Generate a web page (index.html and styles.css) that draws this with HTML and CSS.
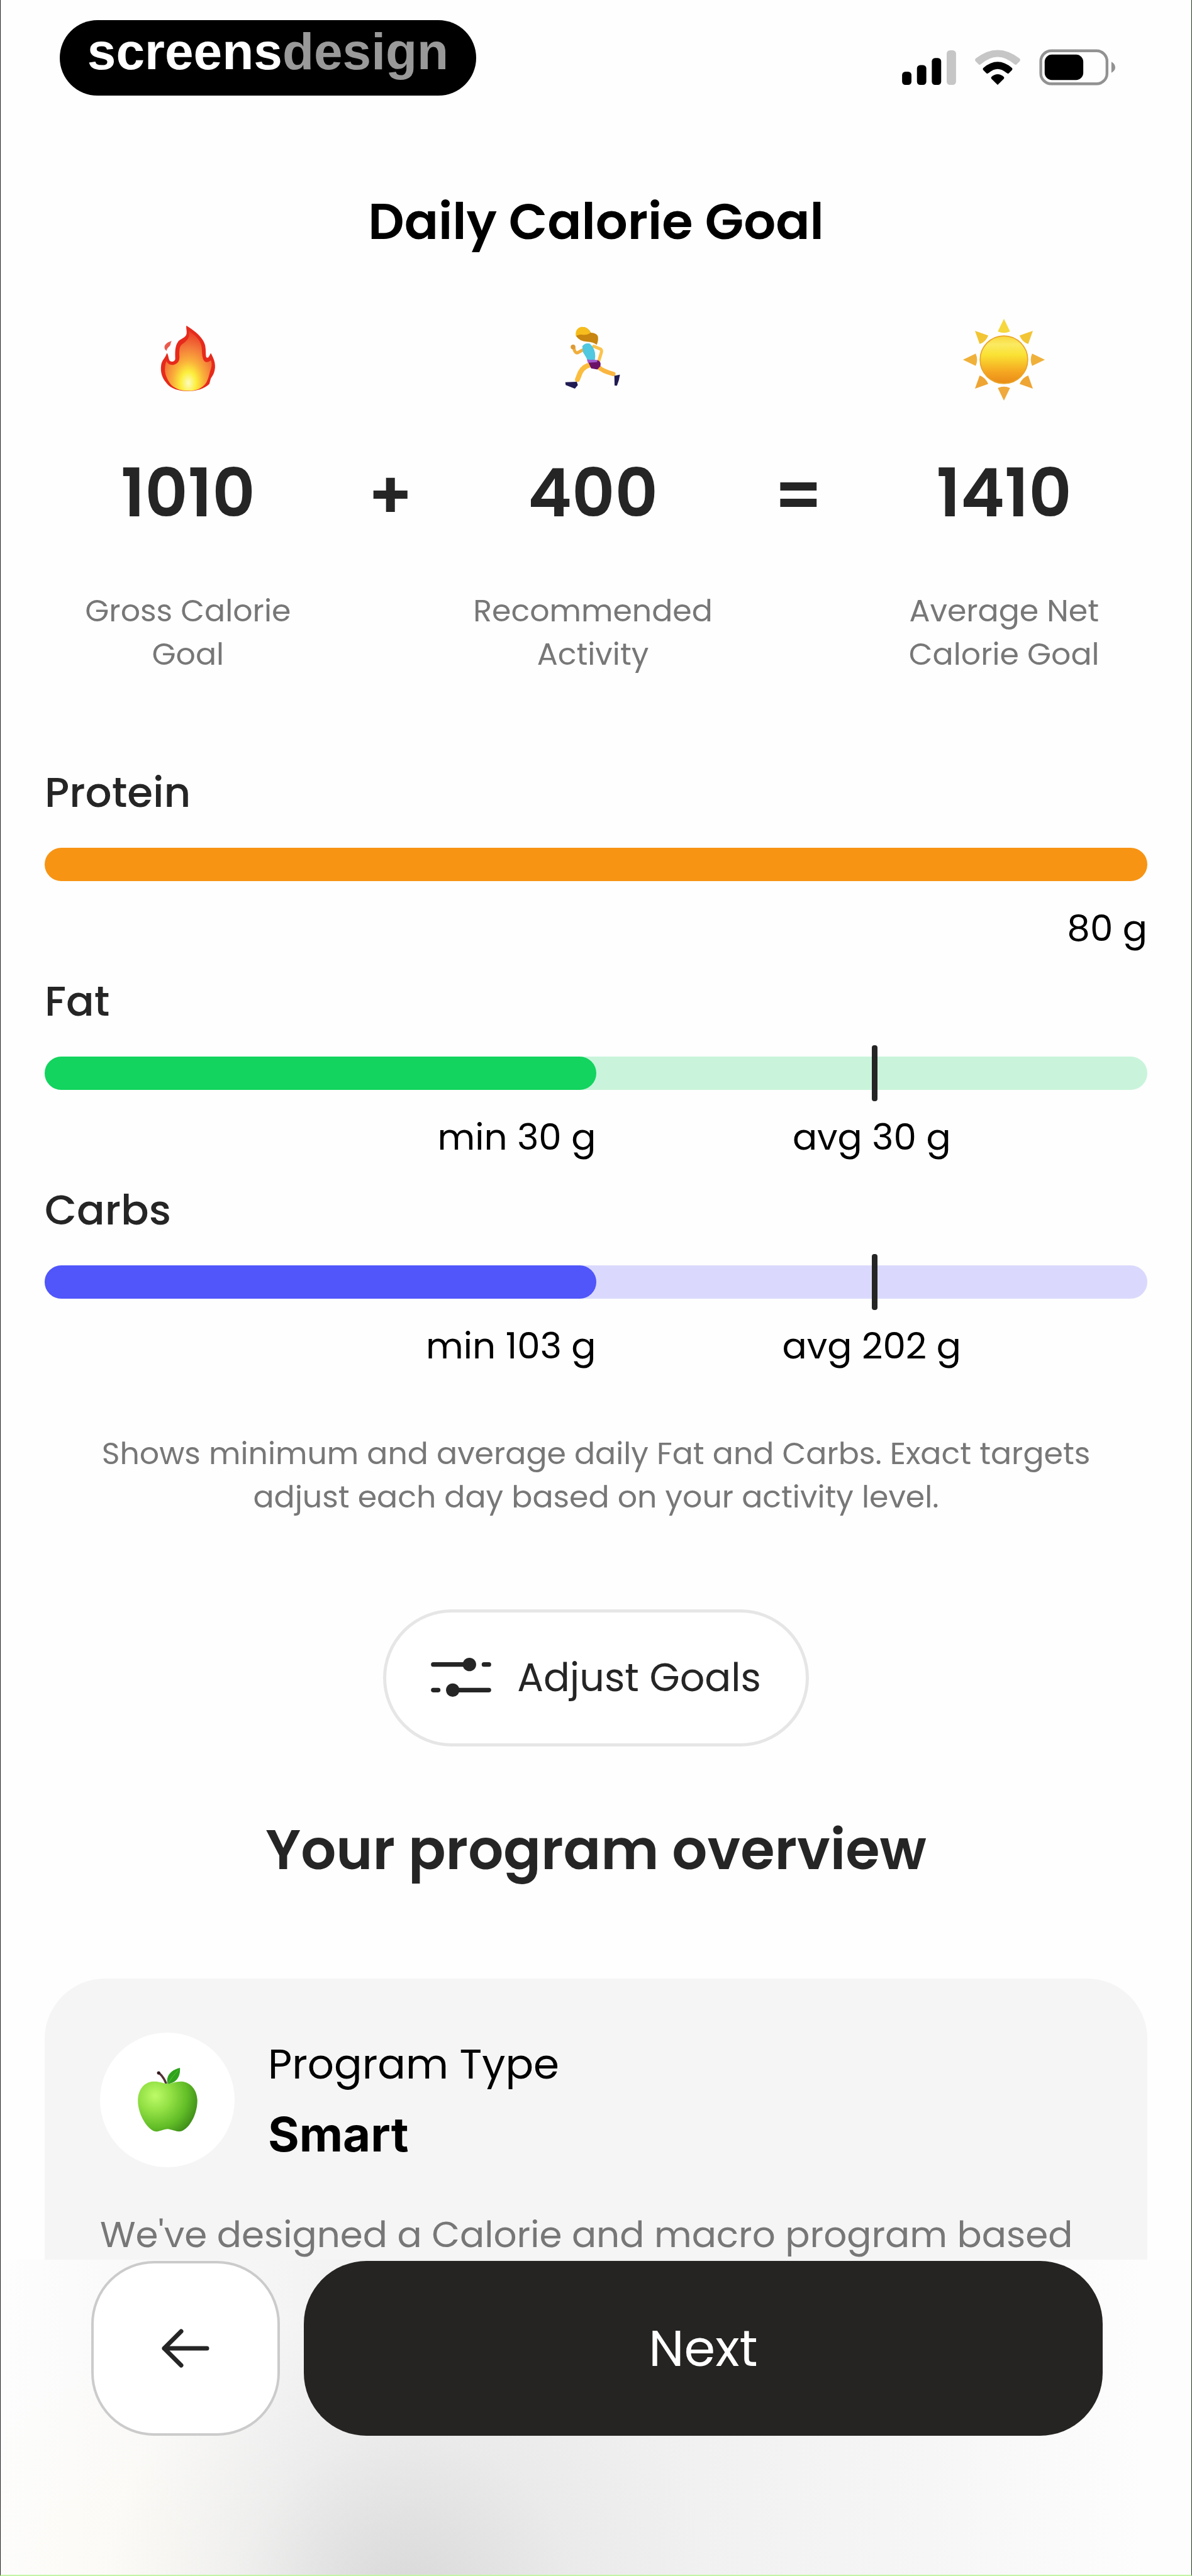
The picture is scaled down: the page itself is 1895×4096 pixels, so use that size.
FILE: index.html
```html
<!DOCTYPE html>
<html lang="en">
<head>
  <meta charset="UTF-8"/>
  <meta name="viewport" content="width=device-width, initial-scale=1.0"/>
  <title>Daily Calorie Goal</title>
  <link rel="stylesheet" href="styles.css">
</head>
<body>

<div class="screen">

  <header class="status-bar">
    <div class="brand">screens<span>design</span></div>
    <div class="status-icons">
      <svg class="signal" viewBox="0 0 98 64">
        <rect x="0" y="40" width="17" height="24" rx="6"/>
        <rect x="27" y="28" width="17" height="36" rx="6"/>
        <rect x="54" y="15" width="17" height="49" rx="6"/>
        <rect x="81" y="1" width="17" height="63" rx="6" fill="#c6c6c6"/>
      </svg>
      <svg class="wifi" viewBox="0 0 84 64">
        <path d="M2 16 Q0 19 2 21 L8 27 Q10 28 12 26 Q42 0 72 26 Q74 28 76 27 L82 21 Q84 19 82 16 Q42 -15 2 16z" fill="#c6c6c6"/>
        <path d="M16 33 Q14 35 16 37 L22 43 Q24 44 26 42 Q42 28 58 42 Q60 44 62 43 L68 37 Q70 35 68 33 Q42 11 16 33z"/>
        <path d="M31 49 Q29 51 31 53 L42 64 L53 53 Q55 51 53 49 Q42 40 31 49z"/>
      </svg>
      <svg class="battery" viewBox="0 0 138 66">
        <rect x="3" y="3" width="120" height="60" rx="19" fill="none" stroke="#929292" stroke-width="5"/>
        <rect x="10" y="10" width="70" height="46" rx="13"/>
        <path d="M131 23 Q138 27 138 33 Q138 39 131 43z" fill="#929292"/>
      </svg>
    </div>
  </header>

  <main class="content">
    <h1>Daily Calorie Goal</h1>

    <!-- gross + activity = net -->
    <div class="equation">
      <div class="term">
        <svg class="emoji" viewBox="374 76 336 336">
          <defs>
            <radialGradient id="flame" gradientUnits="userSpaceOnUse" cx="543" cy="338" r="225" gradientTransform="translate(163 0) scale(0.7 1)">
              <stop offset="0" stop-color="#fdfbc0"/>
              <stop offset="0.2" stop-color="#fcee3c"/>
              <stop offset="0.4" stop-color="#fab03a"/>
              <stop offset="0.65" stop-color="#f3783a"/>
              <stop offset="1" stop-color="#e62a20"/>
            </radialGradient>
          </defs>
          <path fill="#e62a1c" d="M535 106 C560 122 603 150 611 186 C616 212 611 234 619 236 C627 236 629 224 634 217 C642 232 653 252 651 276 C649 296 644 306 634 320 L628 342 C608 362 576 371 541 371 C508 371 470 362 453 336 C438 318 429 296 433 266 C436 244 450 238 456 217 C464 223 461 243 470 250 C479 254 490 249 490 240 C490 218 487 190 503 169 C514 157 530 156 535 142 C539 130 533 120 535 106z"/>
          <path fill="url(#flame)" d="M545 126 C563 140 590 158 596 188 C600 208 596 236 608 250 C618 258 628 252 634 246 C640 260 638 272 632 288 C627 306 625 318 616 336 C600 360 576 370 541 370 C508 370 478 358 465 334 C452 312 446 294 449 272 C450 262 452 254 455 250 C460 262 470 266 481 265 C502 260 508 248 507 230 C506 208 506 190 518 181 C530 173 543 162 546 148z"/>
          <path fill="#ea5a4c" d="M476 167 C470 176 473 184 466 190 C459 197 456 200 455 208 C441 198 446 184 456 177 C463 171 470 172 476 167z"/>
        </svg>
        <strong>1010</strong>
        <p>Gross Calorie<br>Goal</p>
      </div>
      <span class="operator">+</span>
      <div class="term">
        <svg class="emoji" viewBox="0 20 450 450">
          <path d="M117 172 L124 196 Q134 214 146 204 L180 186" fill="none" stroke="#f0ae3c" stroke-width="17" stroke-linecap="round" stroke-linejoin="round"/>
          <circle cx="116" cy="176" r="13" fill="#dc9a35"/>
          <path d="M228 172 L266 188 Q274 194 268 210 L254 256" fill="none" stroke="#fbc34e" stroke-width="17" stroke-linecap="round"/>
          <path d="M212 272 Q172 280 155 314 L140 352" fill="none" stroke="#fbbd3e" stroke-width="27" stroke-linecap="round"/>
          <path d="M250 282 Q276 308 334 322" fill="none" stroke="#fab640" stroke-width="24" stroke-linecap="round"/>
          <path d="M166 172 Q178 152 206 157 L222 174 Q242 206 234 246 L196 250 Q184 226 170 205z" fill="#50c8df"/>
          <path d="M192 244 L252 248 Q270 258 264 280 L248 298 L214 292z" fill="#6b1268"/>
          <path d="M192 244 L248 247 L246 258 L196 261z" fill="#a158cb"/>
          <path d="M74 367 L136 364 L142 382 L126 402 L76 382z" fill="#201b52"/>
          <path d="M340 332 L370 326 Q367 354 354 386 L341 385z" fill="#201b52"/>
          <path d="M132 116 Q130 76 162 68 Q194 64 213 98 Q246 100 251 120 Q254 144 244 164 Q226 148 190 147 Q152 145 132 116z" fill="#c8850f"/>
          <path d="M130 102 Q132 74 160 67 Q192 64 212 98 Q190 114 160 109 Q140 109 132 118z" fill="#f6bd1c"/>
        </svg>
        <strong>400</strong>
        <p>Recommended<br>Activity</p>
      </div>
      <span class="operator">=</span>
      <div class="term">
        <svg class="emoji" viewBox="-75 -75 150 150">
          <defs>
            <linearGradient id="sun" x1="0" y1="0" x2="0" y2="1">
              <stop offset="0" stop-color="#f9d63a"/>
              <stop offset="0.18" stop-color="#fbea62"/>
              <stop offset="0.4" stop-color="#fae233"/>
              <stop offset="0.75" stop-color="#f5a721"/>
              <stop offset="1" stop-color="#e98a17"/>
            </linearGradient>
            <path id="ray" d="M0 -74 L11 -51 Q0 -46 -11 -51z"/>
          </defs>
          <use href="#ray" fill="#f6d73c"/>
          <use href="#ray" fill="#f2c534" transform="rotate(45)"/>
          <use href="#ray" fill="#f0b13a" transform="rotate(90)"/>
          <use href="#ray" fill="#eea534" transform="rotate(135)"/>
          <use href="#ray" fill="#efa93c" transform="rotate(180)"/>
          <use href="#ray" fill="#eea534" transform="rotate(225)"/>
          <use href="#ray" fill="#f0b13a" transform="rotate(270)"/>
          <use href="#ray" fill="#f2c534" transform="rotate(315)"/>
          <circle r="43" fill="url(#sun)" stroke="#eaa52c" stroke-width="2"/>
        </svg>
        <strong>1410</strong>
        <p>Average Net<br>Calorie Goal</p>
      </div>
    </div>

    <section class="macros">
      <div class="macro protein">
        <h3>Protein</h3>
        <div class="bar"><div class="fill"></div></div>
        <div class="values"><span class="total">80 g</span></div>
      </div>
      <div class="macro fat">
        <h3>Fat</h3>
        <div class="bar"><div class="fill"></div><div class="marker"></div></div>
        <div class="values"><span class="min">min 30 g</span><span class="avg">avg 30 g</span></div>
      </div>
      <div class="macro carbs">
        <h3>Carbs</h3>
        <div class="bar"><div class="fill"></div><div class="marker"></div></div>
        <div class="values"><span class="min">min 103 g</span><span class="avg">avg 202 g</span></div>
      </div>
    </section>

    <p class="note">Shows minimum and average daily Fat and Carbs. Exact targets<br>adjust each day based on your activity level.</p>

    <button class="adjust-btn">
      <svg viewBox="0 0 108 70">
        <path d="M4 12 H69 M95 12 H104 M4 58 H13 M39 58 H104" stroke="#252525" stroke-width="8" stroke-linecap="round"/>
        <circle cx="69" cy="12" r="12" fill="#252525"/>
        <circle cx="39" cy="58" r="12" fill="#252525"/>
      </svg>
      Adjust Goals
    </button>

    <h2>Your program overview</h2>

    <section class="card">
      <div class="card-head">
        <div class="card-icon">
          <svg viewBox="72 60 332 360">
            <defs>
              <radialGradient id="apple" gradientUnits="userSpaceOnUse" cx="170" cy="215" r="250">
                <stop offset="0" stop-color="#bdfb68"/>
                <stop offset="0.35" stop-color="#92e044"/>
                <stop offset="0.7" stop-color="#62bd27"/>
                <stop offset="1" stop-color="#3c8a17"/>
              </radialGradient>
            </defs>
            <path d="M190 91 Q214 110 229 146" fill="none" stroke="#533036" stroke-width="12" stroke-linecap="round"/>
            <circle cx="189" cy="91" r="9" fill="#33191f"/>
            <path fill="url(#apple)" d="M237 150 C212 149 196 136 158 138 C106 142 75 188 76 246 C77 310 116 380 156 405 C180 420 204 400 237 397 C270 400 296 420 322 405 C366 380 400 310 400 240 C398 186 366 142 314 138 C282 137 262 150 237 150z"/>
            <path fill="#2fa31d" d="M238 151 C226 108 256 74 305 63 C309 110 286 147 238 151z"/>
            <path d="M240 148 Q262 112 296 76" fill="none" stroke="#5cc536" stroke-width="3"/>
          </svg>
        </div>
        <div>
          <p class="card-label">Program Type</p>
          <p class="card-value">Smart</p>
        </div>
      </div>
      <p class="card-text">We've designed a Calorie and macro program based</p>
    </section>
  </main>

  <footer class="actions">
    <button class="back-btn" aria-label="Back">
      <svg viewBox="0 0 76 62">
        <path d="M72 31 H4 M31 4 L4 31 L31 58" fill="none" stroke="#252525" stroke-width="7" stroke-linecap="round" stroke-linejoin="round"/>
      </svg>
    </button>
    <button class="next-btn">Next</button>
  </footer>

</div>

</body>
</html>
```

FILE: styles.css
```css
* {
  box-sizing: border-box;
}

body {
  font-family: 'Poppins', 'Inter', sans-serif;
  background: #fefefe;
  margin: 0;
  color: #252525;
}

h1, h2, h3, p {
  margin: 0;
}

button {
  font-family: inherit;
  cursor: pointer;
}

.screen {
  display: flex;
  flex-direction: column;
  height: 100vh;
  overflow: hidden;
  border-left: 1px solid #222;
  border-right: 1px solid #1c3a1c;
  border-bottom: 2px solid #c4f5a6;
}

/* status bar */
.status-bar {
  display: flex;
  justify-content: space-between;
  align-items: flex-start;
  padding: 32px 121px 0 94px;
}

.brand {
  background: #000;
  color: #fff;
  border-radius: 60px;
  width: 662px;
  height: 120px;
  text-align: center;
  font-family: 'Liberation Sans', Arial, sans-serif;
  font-size: 82px;
  font-weight: 700;
  line-height: 100px;
}

.brand span {
  color: #999;
}

.status-icons {
  display: flex;
  align-items: center;
  gap: 29px;
  padding-top: 46px;
}

.signal {
  width: 86px;
  height: 56px;
}

.wifi {
  width: 74px;
  height: 56px;
}

.battery {
  width: 121px;
  height: 58px;
}

/* main column */
.content {
  flex: 1;
  min-height: 0;
  overflow: hidden;
  display: flex;
  flex-direction: column;
  padding: 150px 70px 0;
}

h1 {
  color: #000;
  font-size: 80px;
  font-weight: 600;
  line-height: 100px;
  text-align: center;
}

.equation {
  display: grid;
  grid-template-columns: 46fr 19fr 46fr 20fr 46fr;
  margin-top: 104px;
  text-align: center;
}

.term {
  display: flex;
  flex-direction: column;
  align-items: center;
}

.emoji {
  width: 132px;
  height: 132px;
}

.term strong, .operator {
  font-size: 106px;
  font-weight: 600;
  line-height: 130px;
}

.term strong {
  margin-top: 81px;
}

.operator {
  margin-top: 217px;
}

.term p, .note {
  color: #777;
  font-size: 49px;
  line-height: 69px;
  text-align: center;
}

.term p {
  margin-top: 88px;
}

/* macro bars */
.macros {
  display: flex;
  flex-direction: column;
  gap: 31px;
  margin-top: 140px;
}

h3 {
  font-size: 66px;
  font-weight: 500;
  line-height: 90px;
}

.bar {
  position: relative;
  height: 53px;
  margin-top: 43px;
  border-radius: 27px;
}

.fill {
  width: 50%;
  height: 100%;
  border-radius: 27px;
}

.marker {
  position: absolute;
  left: 75%;
  top: -18px;
  bottom: -18px;
  width: 9px;
  border-radius: 4px;
  background: #252525;
}

.protein .fill {
  width: 100%;
  background: #f79414;
}

.fat .bar {
  background: #c9f4db;
}

.fat .fill {
  background: #12d45e;
}

.carbs .bar {
  background: #dad9fd;
}

.carbs .fill {
  background: #5056f9;
}

.values {
  display: flex;
  margin-top: 35px;
  color: #000;
  font-size: 58px;
  line-height: 80px;
}

.values span {
  width: 50%;
}

.values .total {
  width: 100%;
  text-align: right;
}

.values .min {
  text-align: right;
}

.values .avg {
  text-align: center;
}

.note {
  margin-top: 97px;
}

.adjust-btn {
  align-self: center;
  display: flex;
  flex-shrink: 0;
  align-items: center;
  gap: 41px;
  height: 218px;
  margin-top: 144px;
  padding: 0 71px 2px;
  background: #fff;
  border: 5px solid #e6e6e6;
  border-radius: 109px;
  color: #252525;
  font-size: 62px;
}

.adjust-btn svg {
  width: 96px;
  height: 62px;
}

h2 {
  margin-top: 105px;
  font-size: 88px;
  font-weight: 600;
  line-height: 120px;
  text-align: center;
}

/* program card */
.card {
  flex: 1;
  margin-top: 144px;
  padding: 86px 88px 0;
  background: #f5f5f5;
  border-radius: 96px 96px 0 0;
}

.card-head {
  display: flex;
  gap: 53px;
}

.card-icon {
  display: flex;
  align-items: center;
  justify-content: center;
  width: 214px;
  height: 214px;
  border-radius: 50%;
  background: #fff;
}

.card-icon svg {
  width: 97px;
  height: 105px;
}

.card-label {
  color: #000;
  font-size: 66px;
  line-height: 100px;
}

.card-value {
  margin-top: 6px;
  color: #000;
  font-family: 'Inter', sans-serif;
  font-size: 76px;
  font-weight: 700;
  line-height: 110px;
}

.card-text {
  margin-top: 66px;
  color: #777;
  font-size: 58px;
  line-height: 78px;
  white-space: nowrap;
}

/* bottom actions */
.actions {
  display: flex;
  gap: 38px;
  height: 501px;
  padding: 2px 141px 0 144px;
  background:
    radial-gradient(circle 480px at 34% 108%, rgba(214, 214, 214, 0.9), rgba(226, 226, 226, 0.4) 55%, rgba(240, 240, 240, 0)),
    radial-gradient(ellipse 300px 360px at 11% 100%, rgba(253, 251, 245, 0.8), rgba(253, 251, 245, 0)),
    linear-gradient(90deg, #fdfdfd 0%, #f8f8f8 15%, #f0f0f0 35%, #f0f0f0 55%, #f6f6f6 78%, #fdfdfd 96%);
}

.actions button {
  height: 278px;
  border-radius: 100px;
}

.back-btn {
  display: flex;
  align-items: center;
  justify-content: center;
  width: 300px;
  background: #fff;
  border: 4px solid #cbcbcb;
}

.back-btn svg {
  width: 76px;
  height: 62px;
}

.next-btn {
  flex: 1;
  background: #252422;
  border: none;
  color: #fff;
  font-size: 80px;
}
```
